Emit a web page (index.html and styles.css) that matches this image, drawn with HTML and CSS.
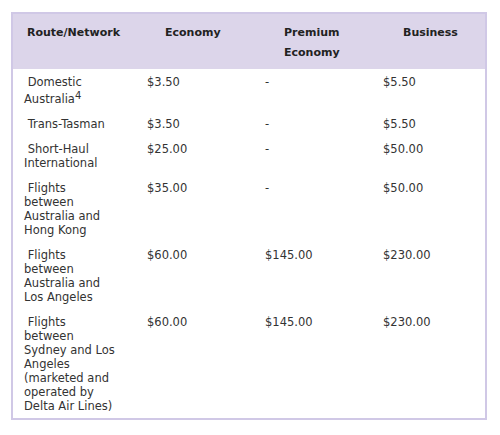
FILE: index.html
```html
<!DOCTYPE html>
<html>
<head>
<meta charset="utf-8">
<link rel="stylesheet" href="styles.css">
</head>
<body>
<table class="fees">
  <thead>
    <tr>
      <th class="c-route">Route/Network</th>
      <th class="c-eco">Economy</th>
      <th class="c-prem">Premium<br>Economy</th>
      <th class="c-bus">Business</th>
    </tr>
  </thead>
  <tbody>
    <tr>
      <td class="c-route">&nbsp;Domestic <span class="aus">Australia<sup>4</sup></span></td>
      <td>$3.50</td>
      <td>-</td>
      <td>$5.50</td>
    </tr>
    <tr>
      <td class="c-route">&nbsp;Trans-Tasman</td>
      <td>$3.50</td>
      <td>-</td>
      <td>$5.50</td>
    </tr>
    <tr>
      <td class="c-route">&nbsp;Short-Haul International</td>
      <td>$25.00</td>
      <td>-</td>
      <td>$50.00</td>
    </tr>
    <tr>
      <td class="c-route">&nbsp;Flights between Australia and Hong Kong</td>
      <td>$35.00</td>
      <td>-</td>
      <td>$50.00</td>
    </tr>
    <tr>
      <td class="c-route">&nbsp;Flights between Australia and Los Angeles</td>
      <td>$60.00</td>
      <td>$145.00</td>
      <td>$230.00</td>
    </tr>
    <tr>
      <td class="c-route">&nbsp;Flights between Sydney and Los Angeles (marketed and operated by Delta Air Lines)</td>
      <td>$60.00</td>
      <td>$145.00</td>
      <td>$230.00</td>
    </tr>
  </tbody>
</table>
</body>
</html>
```

FILE: styles.css
```css
html, body {
  margin: 0;
  padding: 0;
  background: #ffffff;
}
body {
  padding: 12px 0 0 11px;
  font-family: "DejaVu Sans", sans-serif;
  color: #333333;
}
.fees {
  border-collapse: separate;
  border-spacing: 0;
  width: 476px;
  table-layout: fixed;
  border: 2px solid #d0c8e6;
}
.fees th {
  background: #dcd5ea;
  font-weight: bold;
  font-size: 11px;
  line-height: 20px;
  text-align: left;
  vertical-align: top;
  padding: 9px 0 6px 0;
  color: #222222;
}
.fees td {
  font-size: 11.5px;
  line-height: 14px;
  vertical-align: top;
  padding: 6px 4px 5px 4px;
}
.fees th.c-route { width: 116px; padding-left: 14px; }
.fees th.c-eco { width: 96px; padding-left: 22px; }
.fees th.c-prem { width: 95px; padding-left: 23px; }
.fees th.c-bus { padding-left: 24px; }
.fees td.c-route { padding-left: 11px; padding-right: 28px; }
.fees .aus {
  display: inline-block;
  margin-top: 3px;
}
.fees sup {
  font-size: 10px;
  line-height: 0;
  vertical-align: 4px;
}
```
